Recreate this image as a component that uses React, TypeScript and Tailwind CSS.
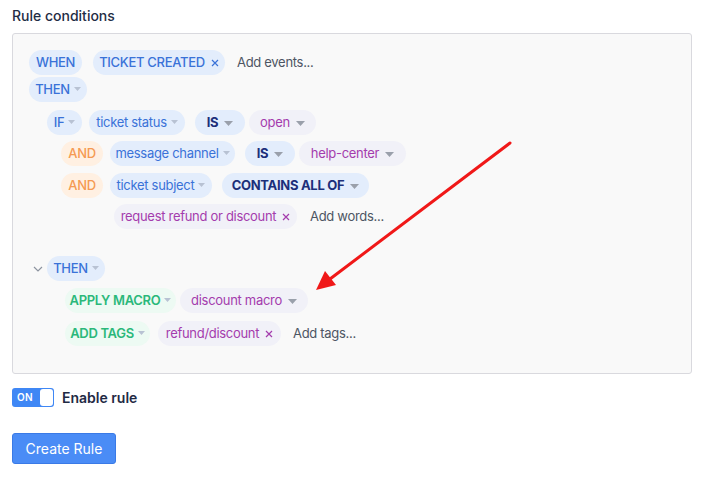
import React from 'react';

type Tone = 'blue' | 'navy' | 'purple' | 'orange' | 'green';

const toneClass: Record<Tone, string> = {
  blue: 'bg-[#e3edfc] text-[#3a72d8] font-medium',
  navy: 'bg-[#e3edfc] text-[#1c2f7a] font-bold',
  purple: 'bg-[#f1f1f8] text-[#a43cad]',
  orange: 'bg-[#fff0e2] text-[#f59a52] font-medium',
  green: 'bg-[#edfaf3] text-[#2ab87a] font-semibold',
};

const Caret = ({ big }: { big?: boolean }) =>
  big ? (
    <svg width="9" height="5" viewBox="0 0 9 5" className="shrink-0 ml-1.5 mt-[2px]">
      <path d="M0 0h9L4.5 5z" fill="#9aa0ab" />
    </svg>
  ) : (
    <svg width="7" height="4" viewBox="0 0 7 4" className="shrink-0 ml-1 -mt-[2px]">
      <path d="M0 0h7L3.5 4z" fill="#b8c2d3" />
    </svg>
  );

const Close = () => (
  <svg width="8" height="8" viewBox="0 0 8 8" className="shrink-0 ml-1.5">
    <path d="M1 1l6 6M7 1L1 7" stroke="currentColor" strokeWidth="1.2" />
  </svg>
);

interface PillProps {
  tone: Tone;
  children: React.ReactNode;
  caret?: 'small' | 'big';
  close?: boolean;
  className?: string;
}

const Pill: React.FC<PillProps> = ({ tone, children, caret, close, className = '' }) => (
  <span
    className={`shrink-0 inline-flex items-center justify-center h-[25px] rounded-full text-[13px] tracking-[-0.3px] leading-none whitespace-nowrap ${toneClass[tone]} ${className}`}
  >
    {children}
    {caret === 'small' && <Caret />}
    {caret === 'big' && <Caret big />}
    {close && <Close />}
  </span>
);

const Hint = ({ children, className = '' }: { children: React.ReactNode; className?: string }) => (
  <span className={`text-[13px] tracking-[-0.3px] text-[#4d5563] ${className}`}>{children}</span>
);

export default function App() {
  return (
    <div className="relative w-[709px] h-[502px] bg-white font-['Inter',sans-serif] px-3">
      <div className="pt-[5px] text-[14px] font-medium text-[#1f2d45]">Rule conditions</div>

      <div className="mt-[7px] w-[680px] h-[341px] rounded-[3px] border border-[#d9d9de] bg-[#f9f9f9] pl-4 pt-[16px] pr-4">
        <div className="flex items-center">
          <Pill tone="blue" className="w-[53px]">WHEN</Pill>
          <Pill tone="blue" close className="ml-[11px] w-[132px]">TICKET CREATED</Pill>
          <Hint className="ml-[12px]">Add events...</Hint>
        </div>

        <div className="flex items-center mt-[2px]">
          <Pill tone="blue" caret="small" className="w-[58px]">THEN</Pill>
        </div>

        <div className="flex items-center mt-[8px] ml-[18px]">
          <Pill tone="blue" caret="small" className="w-[35px]">IF</Pill>
          <Pill tone="blue" caret="small" className="ml-[7px] w-[96px] font-normal">ticket status</Pill>
          <Pill tone="navy" caret="big" className="ml-[10px] w-[50px]">IS</Pill>
          <Pill tone="purple" caret="big" className="ml-[4px] w-[67px]">open</Pill>
        </div>

        <div className="flex items-center mt-[6px] ml-[32px]">
          <Pill tone="orange" className="w-[42px]">AND</Pill>
          <Pill tone="blue" caret="small" className="ml-[7px] w-[125px] font-normal">message channel</Pill>
          <Pill tone="navy" caret="big" className="ml-[10px] w-[50px]">IS</Pill>
          <Pill tone="purple" caret="big" className="ml-[4px] w-[107px]">help-center</Pill>
        </div>

        <div className="flex items-center mt-[7px] ml-[32px]">
          <Pill tone="orange" className="w-[42px]">AND</Pill>
          <Pill tone="blue" caret="small" className="ml-[7px] w-[102px] font-normal">ticket subject</Pill>
          <Pill tone="navy" caret="big" className="ml-[10px] w-[147px]">CONTAINS ALL OF</Pill>
        </div>

        <div className="flex items-center mt-[6px] ml-[85px]">
          <Pill tone="purple" close className="w-[183px]">request refund or discount</Pill>
          <Hint className="ml-[13px]">Add words...</Hint>
        </div>

        <div className="flex items-center mt-[27px]">
          <svg width="10" height="6" viewBox="0 0 10 6" className="ml-[4px] mr-[4px]">
            <path d="M1 1l4 4 4-4" fill="none" stroke="#8d94a0" strokeWidth="1.2" />
          </svg>
          <Pill tone="blue" caret="small" className="w-[58px]">THEN</Pill>
        </div>

        <div className="flex items-center mt-[7px] ml-[36px]">
          <Pill tone="green" caret="small" className="w-[111px]">APPLY MACRO</Pill>
          <Pill tone="purple" caret="big" className="ml-[4px] w-[128px]">discount macro</Pill>
        </div>

        <div className="flex items-center mt-[8px] ml-[36px]">
          <Pill tone="green" caret="small" className="w-[85px]">ADD TAGS</Pill>
          <Pill tone="purple" close className="ml-[8px] w-[123px]">refund/discount</Pill>
          <Hint className="ml-[12px]">Add tags...</Hint>
        </div>
      </div>

      <div className="flex items-center mt-[13px]">
        <div className="flex items-center w-[42px] h-[19px] rounded-[3px] bg-[#3f87f5] pl-[5px] pr-[1px]">
          <span className="text-[10px] font-semibold text-white tracking-wide">ON</span>
          <span className="ml-auto w-[13px] h-[17px] rounded-[3px] bg-white" />
        </div>
        <span className="ml-2 text-[14px] font-semibold text-[#1f2a44]">Enable rule</span>
      </div>

      <button className="mt-[25px] h-[31px] w-[104px] rounded-[3px] border border-[#3a7ae6] bg-[#4a8cf6] text-[14px] text-white">
        Create Rule
      </button>

      <svg className="absolute left-0 top-0 pointer-events-none" width="709" height="502">
        <line x1="510" y1="143" x2="330" y2="279" stroke="#f01818" strokeWidth="3" strokeLinecap="round" />
        <path d="M316 290 L325 271 L336 285 Z" fill="#f01818" />
      </svg>
    </div>
  );
}
